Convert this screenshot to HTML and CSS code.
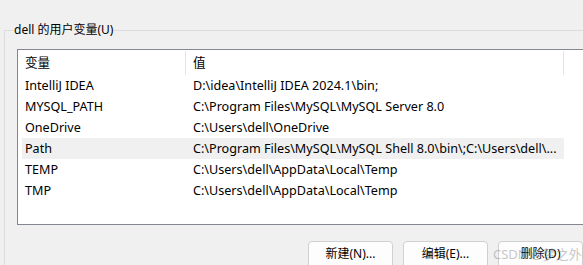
FILE: index.html
```html
<!DOCTYPE html>
<html>
<head>
    <title>环境变量</title>
    <link rel="stylesheet" href="styles.css">
</head>
<body>
    <!-- user variables group -->
    <fieldset class="group">
        <legend class="group-title">dell 的用户变量(U)</legend>

        <div class="listbox">
            <div class="list-head">
                <div class="col-name">变量</div>
                <div class="col-value">值</div>
            </div>
            <div class="list-row">
                <div class="col-name">IntelliJ IDEA</div>
                <div class="col-value">D:\idea\IntelliJ IDEA 2024.1\bin;</div>
            </div>
            <div class="list-row">
                <div class="col-name">MYSQL_PATH</div>
                <div class="col-value">C:\Program Files\MySQL\MySQL Server 8.0</div>
            </div>
            <div class="list-row">
                <div class="col-name">OneDrive</div>
                <div class="col-value">C:\Users\dell\OneDrive</div>
            </div>
            <div class="list-row selected">
                <div class="col-name">Path</div>
                <div class="col-value">C:\Program Files\MySQL\MySQL Shell 8.0\bin\;C:\Users\dell\...</div>
            </div>
            <div class="list-row">
                <div class="col-name">TEMP</div>
                <div class="col-value">C:\Users\dell\AppData\Local\Temp</div>
            </div>
            <div class="list-row">
                <div class="col-name">TMP</div>
                <div class="col-value">C:\Users\dell\AppData\Local\Temp</div>
            </div>
        </div>

        <div class="buttons">
            <button class="btn">新建(N)...</button>
            <button class="btn">编辑(E)...</button>
            <button class="btn">删除(D)</button>
        </div>
    </fieldset>

    <div class="watermark">CSDN @梦之外i</div>
</body>
</html>
```

FILE: styles.css
```css
/* page */
body {
    margin: 0;
    background: #f0f0f0;
    font-family: "Noto Sans", "Noto Sans CJK SC", sans-serif;
    font-size: 12px;
    color: #000;
    width: 583px;
    height: 265px;
    overflow: hidden;
    position: relative;
}

/* group box */
.group {
    margin: 22px 0 0 4px;
    padding: 0 0 0 12px;
    border: 1px solid #dcdcdc;
    border-right: none;
    width: 620px;
    box-sizing: border-box;
    min-width: 0;
}

.group-title {
    margin-left: -4px;
    padding: 0 1px;
    line-height: 16px;
}

/* list */
.listbox {
    margin-top: 11px;
    width: 600px;
    height: 176px;
    box-sizing: border-box;
    border: 1px solid #828790;
    background: #fff;
    font-size: 12.6px;
}

.list-head {
    display: flex;
    height: 25px;
    align-items: center;
}

.list-head .col-name {
    width: 168px;
    padding-left: 7px;
    box-sizing: border-box;
    border-right: 1px solid #e5e5e5;
    height: 24px;
    line-height: 24px;
}

.list-head .col-value {
    width: 378px;
    padding-left: 7px;
    box-sizing: border-box;
    border-right: 1px solid #e5e5e5;
    height: 24px;
    line-height: 24px;
}

.list-row {
    display: flex;
    height: 21px;
    line-height: 21px;
    margin-left: 4px;
    width: 542px;
}

.list-row .col-name {
    width: 164px;
    padding-left: 3px;
    box-sizing: border-box;
}

.list-row .col-value {
    padding-left: 7px;
    white-space: nowrap;
}

.list-row.selected {
    background: #f0f0f0;
}

/* buttons */
.buttons {
    display: flex;
    gap: 10px;
    margin: 16px 0 0 291px;
}

.btn {
    width: 85px;
    height: 28px;
    font: inherit;
    background: #fdfdfd;
    border: 1px solid #d0d0d0;
    border-radius: 4px;
    padding: 0 0 4px;
}

.watermark {
    position: absolute;
    left: 493px;
    top: 244px;
    color: rgba(150, 150, 150, 0.55);
    font-size: 13px;
    white-space: nowrap;
}
```
